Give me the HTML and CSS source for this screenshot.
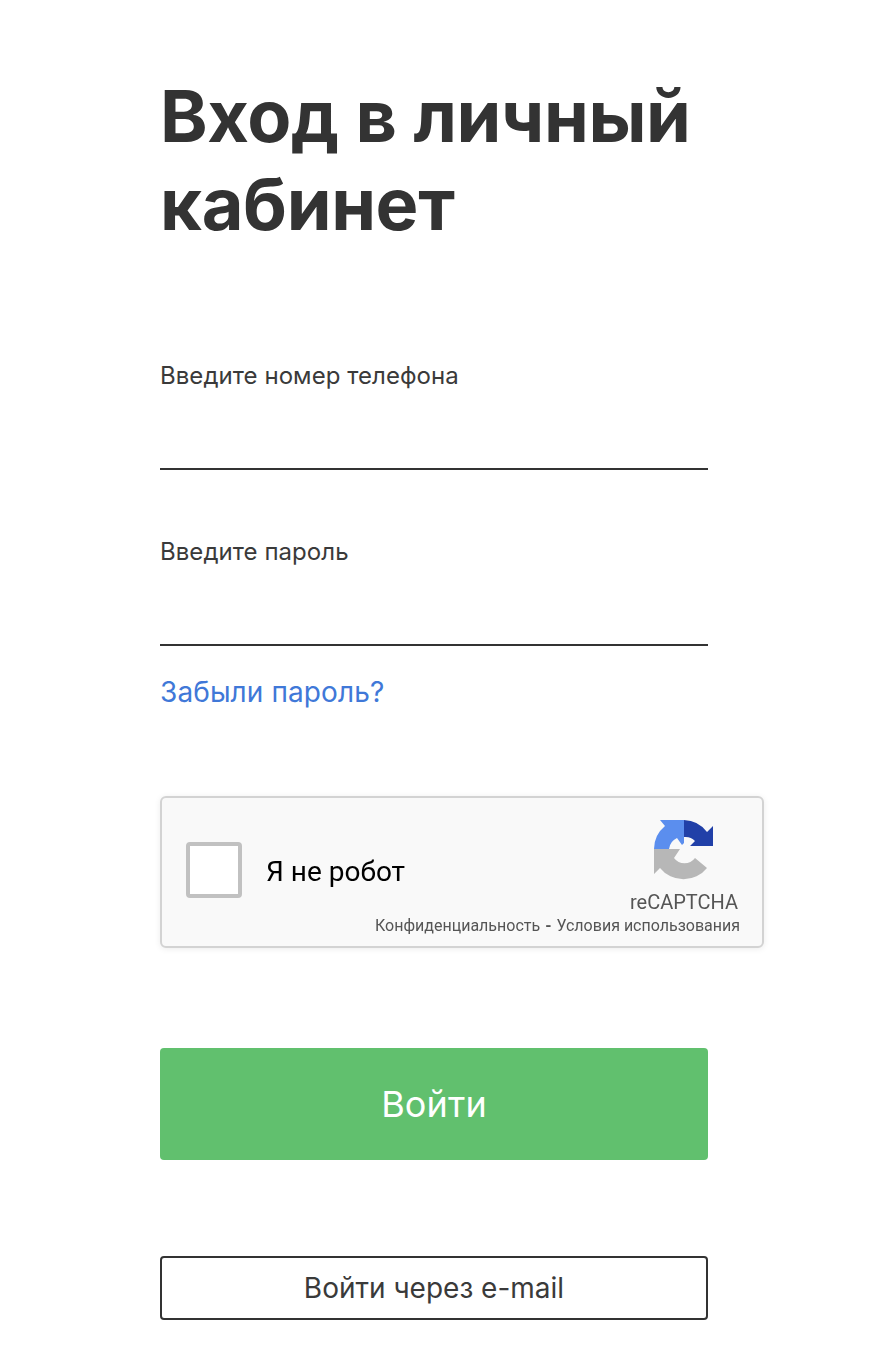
FILE: index.html
```html
<!DOCTYPE html>
<html lang="ru">
<head>
    <meta charset="UTF-8">
    <meta name="viewport" content="width=device-width, initial-scale=1.0">
    <title>Вход в личный кабинет</title>
    <link rel="stylesheet" href="styles.css">
</head>
<body>
    <main class="login">
        <h1 class="login-title">Вход в личный кабинет</h1>

        <form class="login-form">
            <label class="field">
                <span class="field-label">Введите номер телефона</span>
                <input class="field-input" type="tel">
            </label>
            <label class="field field-password">
                <span class="field-label">Введите пароль</span>
                <input class="field-input" type="password">
            </label>
            <a class="forgot-link" href="#">Забыли пароль?</a>

            <!-- Виджет капчи -->
            <div class="captcha">
                <span class="captcha-box"></span>
                <span class="captcha-text">Я не робот</span>
                <div class="captcha-brand">
                    <svg class="captcha-logo" viewBox="0 0 60 60" width="60" height="60" aria-hidden="true">
                        <path fill="#b7b7b7" d="M0 29V54L6 48A30 30 0 0 0 53 48L41 38A13 13 0 0 1 20 38L26 29Z"/>
                        <path fill="#5b8eee" d="M30 0H6L11 6A30 30 0 0 0 0 29H15A14 14 0 0 1 23 18L28 25L30 23Z"/>
                        <path fill="#2140a8" d="M30 0V17A13 13 0 0 1 41 21L36 26H59V6L53 12A30 30 0 0 0 30 0Z"/>
                    </svg>
                    <span class="captcha-name">reCAPTCHA</span>
                    <span class="captcha-links">Конфиденциальность<span class="captcha-dash">-</span>Условия использования</span>
                </div>
            </div>

            <button class="btn btn-submit" type="button">Войти</button>
            <button class="btn btn-email" type="button">Войти через e-mail</button>
        </form>
    </main>
</body>
</html>
```

FILE: styles.css
```css
* {
    margin: 0;
    padding: 0;
    box-sizing: border-box;
}

body {
    background: #fff;
    color: #333;
    font-family: 'Inter', 'Liberation Sans', sans-serif;
}

.login {
    padding: 72px 0 52px 160px;
}

.login-title {
    width: 548px;
    font-size: 72px;
    line-height: 88px;
    font-weight: 700;
    letter-spacing: -0.35px;
    color: #333;
}

.login-form {
    display: flex;
    flex-direction: column;
    align-items: flex-start;
    margin-top: 114px;
}

.field {
    display: block;
    width: 548px;
}

.field-password {
    margin-top: 68px;
}

.field-label {
    display: block;
    font-size: 24px;
    line-height: 28px;
    letter-spacing: 0.05px;
    color: #3a3a3a;
}

.field-input {
    display: block;
    width: 100%;
    height: 80px;
    border: none;
    border-bottom: 2px solid #333;
    background: transparent;
    outline: none;
}

/* Ссылка восстановления */
.forgot-link {
    margin-top: 30px;
    font-size: 28px;
    line-height: 32px;
    letter-spacing: 0.1px;
    color: #4078d8;
    text-decoration: none;
}

/* Капча */
.captcha {
    display: flex;
    align-items: center;
    position: relative;
    width: 604px;
    height: 152px;
    margin-top: 88px;
    padding: 0 0 4px 24px;
    background: #f9f9f9;
    border: 2px solid #d3d3d3;
    border-radius: 6px;
    box-shadow: 0 1px 6px rgba(0, 0, 0, 0.08);
    font-family: 'Roboto', 'Liberation Sans', sans-serif;
    filter: blur(0.4px);
}

.captcha-box {
    width: 56px;
    height: 56px;
    background: #fff;
    border: 4px solid #c1c1c1;
    border-radius: 4px;
}

.captcha-text {
    margin: 2px 0 0 24px;
    font-size: 28px;
    color: #000;
}

.captcha-brand {
    position: absolute;
    top: 22px;
    right: 22px;
    display: flex;
    flex-direction: column;
    align-items: flex-end;
}

.captcha-logo {
    margin-right: 26px;
}

.captcha-name {
    margin: 10px 2px 0 0;
    font-size: 20px;
    line-height: 24px;
    color: #555;
}

.captcha-links {
    margin-top: 2px;
    font-size: 16px;
    line-height: 20px;
    color: #555;
}

.captcha-dash {
    margin: 0 5px;
    font-weight: 700;
}

/* Кнопки */
.btn {
    display: block;
    width: 548px;
    font-family: inherit;
    border-radius: 4px;
    cursor: pointer;
}

.btn-submit {
    height: 112px;
    margin-top: 100px;
    border: none;
    background: #61c06e;
    color: #fff;
    font-size: 36px;
    letter-spacing: 0.1px;
}

.btn-email {
    height: 64px;
    margin-top: 96px;
    border: 2px solid #333;
    background: #fff;
    color: #3a3a3a;
    font-size: 28px;
}
```
